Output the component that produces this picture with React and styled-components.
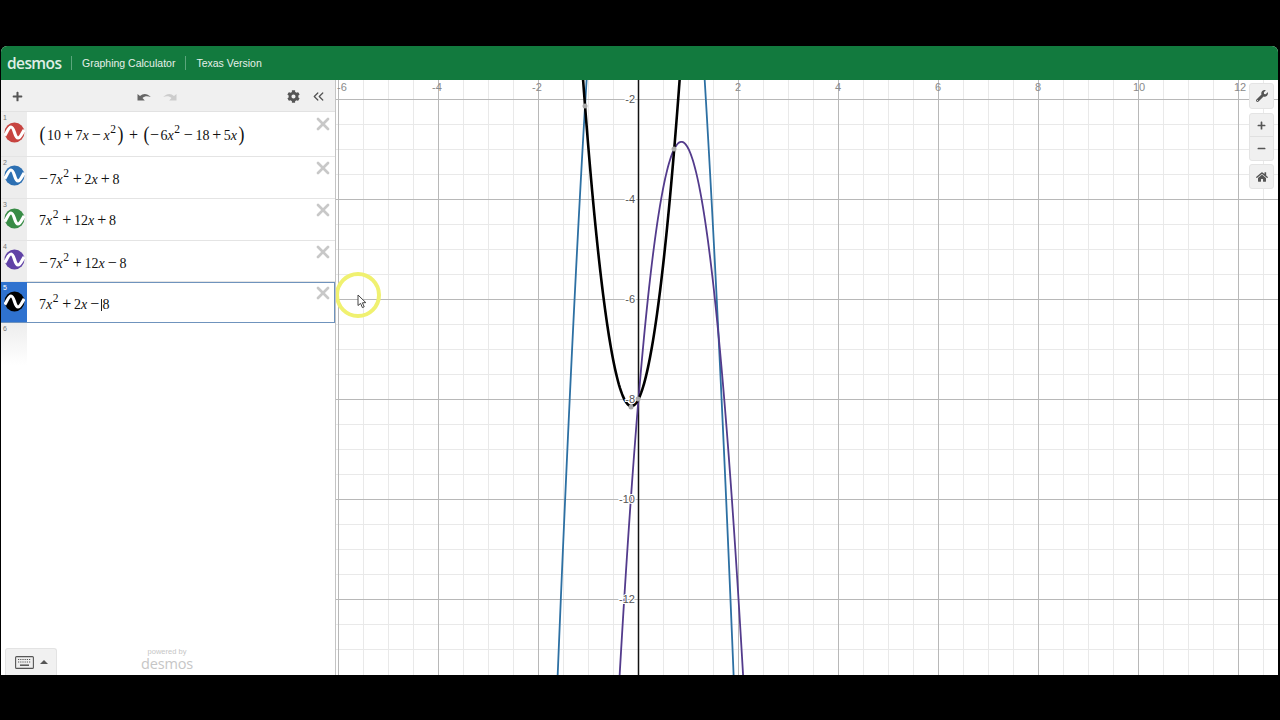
import React from 'react';
import styled, { createGlobalStyle } from 'styled-components';
import { FaCog, FaHome, FaPlus, FaMinus, FaWrench } from 'react-icons/fa';
import { ChevronsLeft, X } from 'lucide-react';

const Global = createGlobalStyle`
  html, body { margin: 0; padding: 0; background: #000; overflow: hidden; }
  #root { width: 1280px; height: 720px; }
`;

const Page = styled.div`
  width: 1280px; height: 720px; background: #000;
  display: grid; grid-template-rows: 46px 629px 45px;
  font-family: "Liberation Sans", Arial, sans-serif;
`;
const Frame = styled.div`
  grid-row: 2; margin: 0 2px 0 1px; background: #fff;
  display: flex; flex-direction: column; border-radius: 6px 6px 0 0; overflow: hidden;
`;
const Header = styled.header`
  height: 34px; flex: none; background: #127a3e; color: #e6f0ea;
  display: flex; align-items: center; padding-left: 6px; font-size: 10.5px;
`;
const Logo = styled.span`
  font-family: "Open Sans", sans-serif; font-size: 15.5px; font-weight: 600; letter-spacing: -0.6px; color: #dfeee5;
  width: 54px;
`;
const HeaderItem = styled.span`
  display: flex; align-items: center; height: 14px;
  margin-left: 10px; padding-left: 10px; border-left: 1px solid #5ba67c;
`;
const Body = styled.div`flex: 1; display: flex; min-height: 0;`;
const Sidebar = styled.aside`
  width: 335px; flex: none; position: relative; display: flex; flex-direction: column;
  background: #fff; border-right: 1px solid #c4c4c4; box-sizing: border-box;
`;
const Toolbar = styled.div`
  height: 32px; flex: none; background: #f0f0f0; color: #555; display: flex; align-items: center;
  padding: 1px 8px 0 11px; border-bottom: 1px solid #e2e2e2; box-sizing: border-box;
`;
const UndoGroup = styled.div`
  display: flex; gap: 12px; align-items: center; margin-left: 114px;
`;
const ToolRight = styled.div`
  margin-left: auto; display: flex; gap: 10px; align-items: center;
`;
const ExprRow = styled.div`
  height: ${p => p.$h}px; flex: none; display: flex; position: relative; box-sizing: border-box;
  border-bottom: 1px solid ${p => p.$active ? '#6f93bd' : '#e4e4e4'};
  outline: ${p => p.$active ? '1px solid #6f93bd' : 'none'}; outline-offset: -1px;
  background: #fff;
`;
const Gutter = styled.div`
  width: 26px; flex: none; position: relative; box-sizing: border-box;
  padding-bottom: ${p => p.$lift}px;
  background: ${p => p.$active ? '#2f72cf' : '#ededed'};
  color: ${p => p.$active ? '#fff' : '#777'};
  display: flex; align-items: center; justify-content: center;
`;
const RowNum = styled.span`position: absolute; left: 2px; top: 2px; font-size: 7px; line-height: 8px;`;
const MathText = styled.div`
  font-family: "Liberation Serif", "Times New Roman", serif; font-size: 14px; color: #111;
  display: flex; align-items: baseline; padding: ${p => p.$top}px 0 0 12px; white-space: nowrap;
`;
const Var = styled.i`margin-right: 0.5px;`;
const Sup = styled.sup`font-size: 11.5px; line-height: 0; vertical-align: baseline; transform: translateY(-7px); margin: 0 1px 0 0;`;
const Op = styled.span`font-size: 16px; line-height: 0; margin: 0 ${p => p.$m ?? 2.7}px;`;
const Neg = styled.span`font-size: 16px; line-height: 0; margin-right: 1.5px;`;
const Paren = styled.span`
  font-size: 21px; font-weight: 400; line-height: 0; display: inline-block; transform: scaleX(0.85) translateY(1px);
`;
const ParenGap = styled.span`margin-left: 1px;`;
const Caret = styled.span`
  display: inline-block; width: 1px; height: 12px; background: #222; margin-left: -1px; margin-right: 0.5px; transform: translateY(2px);
`;
const Remove = styled.div`
  position: absolute; right: 2px; top: ${p => p.$t}px; color: #c8c8c8; display: flex;
`;
const EmptyRow = styled.div`
  height: 42px; flex: none; display: flex;
`;
const FadeGutter = styled.div`
  width: 26px; position: relative; color: #777;
  background: linear-gradient(#ededed, #fff);
`;
const Footer = styled.div`
  position: absolute; left: 4px; right: 0; bottom: 0; height: 28px;
`;
const KeyboardBtn = styled.button`
  position: absolute; left: 0; bottom: 0; width: 52px; height: 27px; padding: 0; box-sizing: border-box;
  background: #f1f1f1; border: 1px solid #e3e3e3; border-bottom: none; border-radius: 3px 3px 0 0;
  display: flex; align-items: center; justify-content: center; gap: 6px;
`;
const Tri = styled.span`
  width: 0; height: 0; border-left: 4px solid transparent; border-right: 4px solid transparent; border-bottom: 4px solid #555;
`;
const Powered = styled.div`
  position: absolute; left: 127px; bottom: 4px; width: 70px; color: #c6c6c6; text-align: center;
`;
const PoweredSmall = styled.div`font-size: 7.5px; line-height: 8px; height: 9px;`;
const PoweredLogo = styled.div`font-family: "Open Sans", sans-serif; font-size: 14.5px; line-height: 14px; letter-spacing: -0.2px;`;
const Graph = styled.main`flex: 1; position: relative; background: #fff; overflow: hidden;`;
const Plot = styled.svg`display: block; width: 100%; height: 100%;`;
const ToolBox = styled.div`
  position: absolute; right: 4px; top: ${p => p.$t}px; width: 25px; box-sizing: border-box;
  background: #f0f0f0; border: 1px solid #e4e4e4; border-radius: 3px; color: #555;
  display: flex; flex-direction: column;
`;
const ToolCell = styled.div`
  height: ${p => p.$h}px; display: flex; align-items: center; justify-content: center;
  & + & { border-top: 1px solid #e0e0e0; }
`;
const Spot = styled.div`
  position: absolute; left: -1px; top: 192px; width: 46px; height: 46px; box-sizing: border-box;
  border: 4px solid #f0f170; border-radius: 50%;
`;
const Pointer = styled.svg`position: absolute; left: 21px; top: 214px;`;

const WaveIcon = ({ color }) => (
  <svg width="21" height="21" viewBox="0 0 21 21">
    <circle cx="10.5" cy="10.5" r="10" fill={color} />
    <path d="M0.8 13.5 C3 10.5 4.5 5 7 5 C10.5 5 10.5 16 14 16 C16.5 16 18 11 20.2 8" fill="none" stroke="#fff" strokeWidth="3.2" />
  </svg>
);

const ArrowIcon = ({ color, flip }) => (
  <svg width="14" height="10" viewBox="0 0 14 10" style={flip ? { transform: 'scaleX(-1)' } : undefined}>
    <path d="M0.5 9.5 L0.5 3 L3 5 C6 2.2 10 2 13.8 6 C10.5 4.8 7.5 5 5.5 7 L7.8 9.5 Z" fill={color} />
  </svg>
);

const KeyboardIcon = () => (
  <svg width="19" height="13" viewBox="0 0 19 13">
    <rect x="0.6" y="0.6" width="17.8" height="11.8" rx="1" fill="#eee" stroke="#555" strokeWidth="1.1" />
    <path d="M3 3.5h13M3 6h13" stroke="#555" strokeWidth="1.2" strokeDasharray="1.2 1" />
    <path d="M5 9.2h9" stroke="#555" strokeWidth="1.5" />
  </svg>
);

const V = () => <Var>x</Var>;
const S = () => <Sup>2</Sup>;

const X0 = 638.5, Y0 = -1, U = 50;
const curve = (a, b, c) => {
  const pts = [];
  for (let px = 540; px <= 760; px += 1) {
    const x = (px - X0) / U;
    const y = a * x * x + b * x + c;
    pts.push(`${px},${(Y0 - U * y).toFixed(1)}`);
  }
  return pts.join(' ');
};

const minorX = [], majorX = [], minorY = [], majorY = [];
for (let i = -12; i <= 26; i++) {
  const px = 638.5 + i * 25;
  if (px < 336 || px > 1278) continue;
  (i % 4 === 0 ? majorX : minorX).push(px);
}
for (let i = 3; i <= 26; i++) {
  const py = -0.5 + i * 25;
  if (py < 80 || py > 675) continue;
  (i % 4 === 0 ? majorY : minorY).push(py);
}

const xLabels = [[-6, 342], [-4, 437], [-2, 537], [2, 738], [4, 838], [6, 938], [8, 1038], [10, 1139], [12, 1240]];
const yLabels = [-2, -4, -6, -8, -10, -12];
const dots = [[585, 106], [674, 149], [638, 399], [631, 407]];

const GraphPlot = () => (
  <Plot viewBox="336 80 942 595">
    {minorX.map(x => <line key={x} x1={x} x2={x} y1="80" y2="675" stroke="#e9e9e9" />)}
    {minorY.map(y => <line key={y} y1={y} y2={y} x1="336" x2="1278" stroke="#e9e9e9" />)}
    {majorX.map(x => <line key={x} x1={x} x2={x} y1="80" y2="675" stroke="#b8b8b8" />)}
    {majorY.map(y => <line key={y} y1={y} y2={y} x1="336" x2="1278" stroke="#b8b8b8" />)}
    <line x1="638.5" x2="638.5" y1="80" y2="675" stroke="#111" strokeWidth="1.5" />
    <polyline points={curve(-7, 2, 8)} fill="none" stroke="#2d70a3" strokeWidth="1.8" />
    <polyline points={curve(-7, 12, -8)} fill="none" stroke="#533b8c" strokeWidth="1.8" />
    <polyline points={curve(7, 2, -8)} fill="none" stroke="#000" strokeWidth="2.6" />
    {dots.map(([x, y]) => <circle key={x} cx={x} cy={y} r="2.5" fill="#aaa" />)}
    {xLabels.map(([v, x]) => (
      <text key={v} x={x} y="91" textAnchor="middle" fontSize="11" fill="#8a8a8a" fontFamily="Liberation Sans, Arial, sans-serif">{v}</text>
    ))}
    {yLabels.map(v => (
      <text key={v} x="635" y={-1 - 50 * v + 4} textAnchor="end" fontSize="11" fill="#555" stroke="#fff" strokeWidth="2" paintOrder="stroke" fontFamily="Liberation Sans, Arial, sans-serif">{v}</text>
    ))}
  </Plot>
);

const rows = [
  { h: 45, color: '#c74440', top: 16, x: 2, lift: 4, math: (
    <>
      <Paren>(</Paren><ParenGap>10</ParenGap><Op>+</Op>7<V /><Op>−</Op><V /><S /><Paren>)</Paren>
      <Op $m={5}>+</Op>
      <Paren>(</Paren><Neg>−</Neg>6<V /><S /><Op>−</Op>18<Op>+</Op>5<V /><Paren>)</Paren>
    </>
  ) },
  { h: 42, color: '#2d70b3', top: 15, x: 1, lift: 4, math: <><Neg>−</Neg>7<V /><S /><Op>+</Op>2<V /><Op>+</Op>8</> },
  { h: 42, color: '#388c46', top: 14, x: 1, lift: 2, math: <>7<V /><S /><Op>+</Op>12<V /><Op>+</Op>8</> },
  { h: 41, color: '#6042a6', top: 15, x: 1, lift: 4, math: <><Neg>−</Neg>7<V /><S /><Op>+</Op>12<V /><Op>−</Op>8</> },
  { h: 41, color: '#000', top: 15, x: 1, lift: 2, active: true, math: <>7<V /><S /><Op>+</Op>2<V /><Op>−</Op><Caret />8</> },
];

export default function App() {
  return (
    <Page>
      <Global />
      <Frame>
        <Header>
          <Logo>desmos</Logo>
          <HeaderItem>Graphing Calculator</HeaderItem>
          <HeaderItem>Texas Version</HeaderItem>
        </Header>
        <Body>
          <Sidebar>
            <Toolbar>
              <FaPlus size={11} />
              <UndoGroup>
                <ArrowIcon color="#666" />
                <ArrowIcon color="#ccc" flip />
              </UndoGroup>
              <ToolRight>
                <FaCog size={13} />
                <ChevronsLeft size={17} strokeWidth={1.8} />
              </ToolRight>
            </Toolbar>
            {rows.map((r, i) => (
              <ExprRow key={i} $h={r.h} $active={r.active}>
                <Gutter $active={r.active} $lift={r.lift}>
                  <RowNum>{i + 1}</RowNum>
                  <WaveIcon color={r.color} />
                </Gutter>
                <MathText $top={r.top}>{r.math}</MathText>
                <Remove $t={r.x}><X size={20} strokeWidth={3.2} /></Remove>
              </ExprRow>
            ))}
            <EmptyRow>
              <FadeGutter><RowNum>6</RowNum></FadeGutter>
            </EmptyRow>
            <Footer>
              <KeyboardBtn><KeyboardIcon /><Tri /></KeyboardBtn>
              <Powered>
                <PoweredSmall>powered by</PoweredSmall>
                <PoweredLogo>desmos</PoweredLogo>
              </Powered>
            </Footer>
          </Sidebar>
          <Graph>
            <GraphPlot />
            <ToolBox $t={3}><ToolCell $h={24}><FaWrench size={12} /></ToolCell></ToolBox>
            <ToolBox $t={33}>
              <ToolCell $h={22}><FaPlus size={9} /></ToolCell>
              <ToolCell $h={23}><FaMinus size={9} /></ToolCell>
            </ToolBox>
            <ToolBox $t={84}><ToolCell $h={23}><FaHome size={12} /></ToolCell></ToolBox>
            <Spot />
            <Pointer width="11" height="15" viewBox="0 0 11 15">
              <path d="M1 1 L1 11.5 L3.6 9.4 L5.4 13.6 L7.2 12.8 L5.4 8.8 L8.8 8.6 Z" fill="#fff" stroke="#444" strokeWidth="1" />
            </Pointer>
          </Graph>
        </Body>
      </Frame>
    </Page>
  );
}
